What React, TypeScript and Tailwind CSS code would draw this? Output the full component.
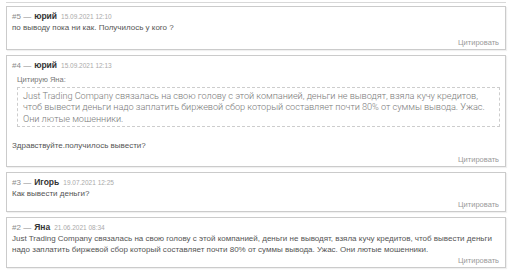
import React from "react";

type Comment = {
  num: number;
  author: string;
  date: string;
  quote?: { author: string; text: string };
  text: string;
  extra?: string;
};

const comments: Comment[] = [
  {
    num: 5,
    author: "юрий",
    date: "15.09.2021 12:10",
    text: "по выводу пока ни как. Получилось у кого ?",
    extra: "mt-[3px]",
  },
  {
    num: 4,
    author: "юрий",
    date: "15.09.2021 12:13",
    quote: {
      author: "Яна",
      text: "Just Trading Company связалась на свою голову с этой компанией, деньги не выводят, взяла кучу кредитов, чтоб вывести деньги надо заплатить биржевой сбор который составляет почти 80% от суммы вывода. Ужас. Они лютые мошенники.",
    },
    text: "Здравствуйте.получилось вывести?",
    extra: "mt-[2px]",
  },
  {
    num: 3,
    author: "Игорь",
    date: "19.07.2021 12:25",
    text: "Как вывести деньги?",
  },
  {
    num: 2,
    author: "Яна",
    date: "21.06.2021 08:34",
    text: "Just Trading Company связалась на свою голову с этой компанией, деньги не выводят, взяла кучу кредитов, чтоб вывести деньги надо заплатить биржевой сбор который составляет почти 80% от суммы вывода. Ужас. Они лютые мошенники.",
  },
];

const CommentCard = ({ c }: { c: Comment }) => {
  return (
    <div className="border border-[#cbcbcb] bg-white px-[5px] pt-[3px] pb-[1px] shadow-[1px_1px_1px_rgba(0,0,0,0.06)]">
      {/* Header */}
      <div className="flex items-baseline text-[8px] leading-[12px] text-[#8a8a8a]">
        <span>#{c.num} —</span>
        <span className="ml-[3px] text-[8.5px] font-bold text-[#333]">{c.author}</span>
        <span className="ml-[4px] text-[6.5px] text-[#aaa]">{c.date}</span>
      </div>

      {/* Quote */}
      {c.quote && (
        <div className="pl-[5px] pt-[2px]">
          <div className="text-[7.5px] leading-[11px] text-[#777]">Цитирую {c.quote.author}:</div>
          <div
            className="mt-[2px] border border-dashed border-[#cdcdcd] pl-[5px] pr-[2px] py-[2px] text-[9.2px] leading-[11.5px] font-light tracking-[-0.05px] text-[#7a7a7a]"
            style={{ fontFamily: 'Roboto, "Liberation Sans", sans-serif' }}
          >
            {c.quote.text}
          </div>
        </div>
      )}

      {/* Body */}
      <div className={`text-[8px] leading-[10.5px] text-[#555] ${c.quote ? "mt-[14px]" : ""}`}>
        {c.text}
      </div>

      {/* Footer */}
      <div className={`text-right text-[7.5px] leading-[11px] text-[#999] pr-[1px] ${c.extra ?? ""}`}>
        Цитировать
      </div>
    </div>
  );
};

export default function App() {
  return (
    <div
      className="h-[273px] w-[512px] overflow-hidden bg-white"
      style={{ fontFamily: '"Liberation Sans", Arial, sans-serif' }}
    >
      <div className="px-[6px]">
        <div className="h-[3px] border-b border-[#d8d8d8]" />
        <div className="mt-[3px] flex flex-col gap-[5px]">
          {comments.map((c) => (
            <CommentCard key={c.num} c={c} />
          ))}
        </div>
      </div>
    </div>
  );
}
